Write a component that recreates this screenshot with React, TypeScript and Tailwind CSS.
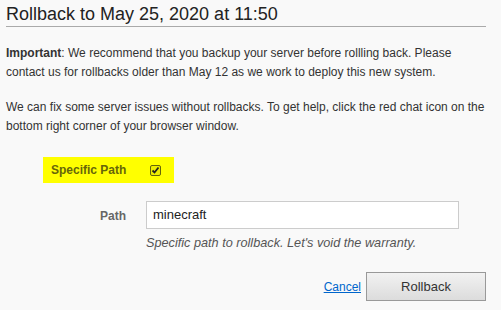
import React from "react";

export default function App() {
  return (
    <div className="w-[501px] h-[310px] bg-[#f9f9f9] text-[#333] overflow-hidden" style={{ fontFamily: '"Liberation Sans", Arial, sans-serif' }}>
      <div className="pl-[6px] pr-[15px]">
        <h1 className="text-[18px] leading-[21px] pt-[4px] pb-[1px] border-b border-[#aaa] font-normal text-[#222]">
          Rollback to May 25, 2020 at 11:50
        </h1>
        <p className="text-[12px] leading-[19px] mt-[17px]">
          <b>Important</b>: We recommend that you backup your server before rollling back. Please contact us for rollbacks older than May 12 as we work to deploy this new system.
        </p>
        <p className="text-[12px] leading-[19px] mt-[16px]">
          We can fix some server issues without rollbacks. To get help, click the red chat icon on the bottom right corner of your browser window.
        </p>
      </div>
      <div className="mt-[21px] pl-[43px]">
        <div className="flex items-center w-[131px] h-[26px] bg-[#ffff00]">
          <span className="text-[12px] font-bold text-[#66660a] pl-[8px] w-[107px]">Specific Path</span>
          <div className="w-[11px] h-[11px] border border-[#66660a] rounded-[2px] bg-[#eded00] flex items-center justify-center">
            <svg width="9" height="9" viewBox="0 0 9 9">
              <path d="M1.5 4.5 L3.5 6.5 L7.5 1.5" fill="none" stroke="#222" strokeWidth="1.8" />
            </svg>
          </div>
        </div>
      </div>
      <div className="flex mt-[18px]">
        <div className="w-[126px] text-right text-[12px] font-bold text-[#666] pt-[6px]">Path</div>
        <div className="ml-[20px]">
          <div className="w-[313px] h-[28px] border border-[#ccc] bg-white flex items-center px-[6px] text-[13px] text-[#222]">minecraft</div>
          <div className="text-[12.7px] italic text-[#555] mt-[5px]">Specific path to rollback. Let's void the warranty.</div>
        </div>
      </div>
      <div className="flex justify-end items-center pr-[15px] mt-[19px] gap-[5px]">
        <a href="#" className="text-[12px] text-[#0066cc] underline">Cancel</a>
        <button className="w-[120px] h-[29px] border border-[#999] bg-gradient-to-b from-[#f2f2f2] to-[#dcdcdc] text-[13px] text-[#333]">Rollback</button>
      </div>
    </div>
  );
}
